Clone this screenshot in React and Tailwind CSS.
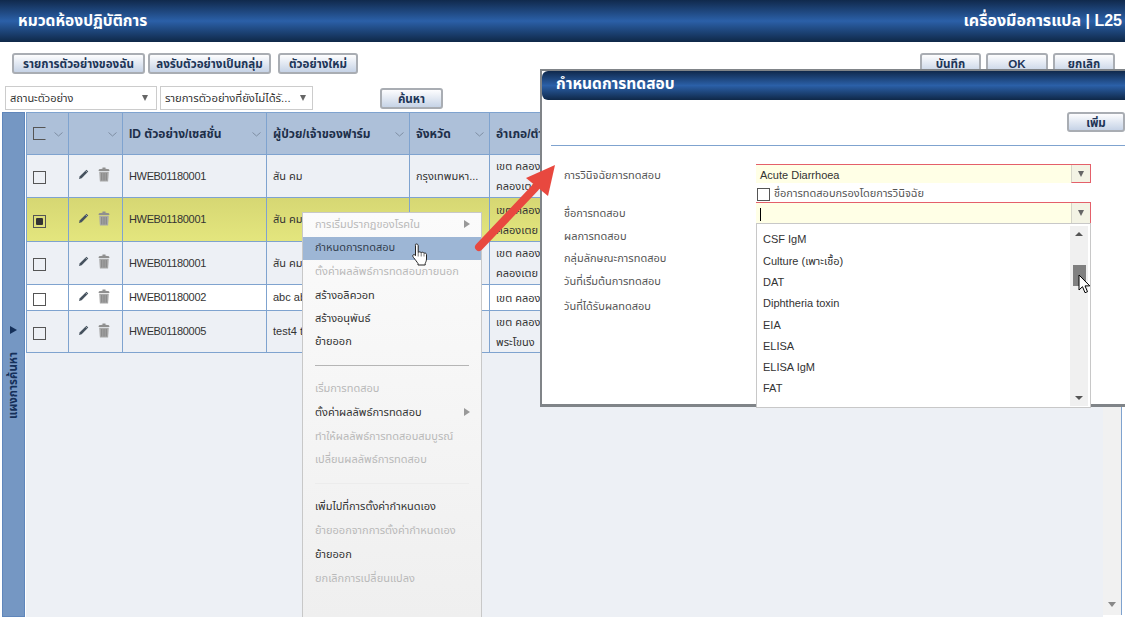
const font = { fontFamily: '"Liberation Sans", "Noto Sans Thai", "Noto Sans", sans-serif' };

const rows = [
  { h: 'h-[43px]', id: 'HWEB01180001', name: 'สัน คม', prov: 'กรุงเทพมหา...', dist: ['เขต คลองเตย', 'คลองเตย'], bg: 'bg-[#edf0f5]' },
  { h: 'h-[44px]', id: 'HWEB01180001', name: 'สัน คม', prov: '', dist: ['เขต คลองเตย', 'คลองเตย'], bg: 'bg-[linear-gradient(#d6d773,#e4e67e)]', sel: true },
  { h: 'h-[43px]', id: 'HWEB01180001', name: 'สัน คม', prov: '', dist: ['เขต คลองเตย', 'คลองเตย'], bg: 'bg-[#edf0f5]' },
  { h: 'h-[26px]', id: 'HWEB01180002', name: 'abc abc', prov: '', dist: ['เขต คลองเตย'], bg: 'bg-white' },
  { h: 'h-[42px]', id: 'HWEB01180005', name: 'test4 test', prov: '', dist: ['เขต คลองเตย', 'พระโขนง'], bg: 'bg-[#edf0f5]' },
];

const menu = [
  { t: 'การเริ่มปรากฏของโรคใน', off: true, sub: true, h: 'h-[24px]' },
  { t: 'กำหนดการทดสอบ', active: true, h: 'h-[23px]' },
  { t: 'ตั้งค่าผลลัพธ์การทดสอบภายนอก', off: true, h: 'h-[24px]' },
  { t: 'สร้างอลิควอท', h: 'h-[24px]' },
  { t: 'สร้างอนุพันธ์', h: 'h-[23px]' },
  { t: 'ย้ายออก', h: 'h-[23px]' },
  { line: 'bg-[#b5b5b5]' },
  { t: 'เริ่มการทดสอบ', off: true, h: 'h-[24px]' },
  { t: 'ตั้งค่าผลลัพธ์การทดสอบ', sub: true, h: 'h-[24px]' },
  { t: 'ทำให้ผลลัพธ์การทดสอบสมบูรณ์', off: true, h: 'h-[24px]' },
  { t: 'เปลี่ยนผลลัพธ์การทดสอบ', off: true, h: 'h-[23px]' },
  { line: 'bg-[#ececec]' },
  { t: 'เพิ่มไปที่การตั้งค่ากำหนดเอง', h: 'h-[24px]' },
  { t: 'ย้ายออกจากการตั้งค่ากำหนดเอง', off: true, h: 'h-[24px]' },
  { t: 'ย้ายออก', h: 'h-[24px]' },
  { t: 'ยกเลิกการเปลี่ยนแปลง', off: true, h: 'h-[24px]' },
];

const options = ['CSF IgM', 'Culture (เพาะเชื้อ)', 'DAT', 'Diphtheria toxin', 'EIA', 'ELISA', 'ELISA IgM', 'FAT'];

function Btn({ children, className = '' }) {
  return (
    <button className={`rounded-[3px] border-2 border-[#a9adb3] bg-[linear-gradient(#fdfdfe,#c6d3e6)] text-[11.6px] font-bold text-[#1d3557] ${className}`}>
      {children}
    </button>
  );
}

function Check({ on, open }) {
  return (
    <span className={`flex h-[13px] w-[13px] items-center justify-center border border-[#555] ${open ? 'border-r-transparent' : ''}`}>
      {on && <span className="h-[7px] w-[7px] rounded-[1px] bg-[#333]" />}
    </span>
  );
}

function Pencil() {
  return (
    <svg width="11" height="11" viewBox="0 0 12 12">
      <path d="M9.200.800l2 2-7.200 7.200L1 11l1-3z" fill="#46525e" />
      <path d="M8.200 1.800l2 2" stroke="#c9d0d8" strokeWidth=".8" />
    </svg>
  );
}

function Trash() {
  return (
    <svg width="12" height="15" viewBox="0 0 12 15">
      <path d="M4.500.500h3v1.200l3.500.5.500 1.800H.500l.5-1.800 3.500-.5z" fill="#8f8f8f" />
      <path d="M1.200 4.800h9.600l-.7 9.700H1.900z" fill="#a8a8a8" />
      <path d="M3.800 6v7.500M6 6v7.500M8.200 6v7.500" stroke="#7c7c7c" strokeWidth=".9" />
    </svg>
  );
}

function Caret({ className = '' }) {
  return <span className={`inline-block h-0 w-0 border-x-[3.5px] border-t-[6px] border-x-transparent border-t-[#666] ${className}`} />;
}

function Chevron() {
  return (
    <svg width="9" height="5" viewBox="0 0 9 5" className="absolute right-[5px] top-[19px]">
      <path d="M.5.500l4 3.500 4-3.500" fill="none" stroke="#7f8ea3" />
    </svg>
  );
}

function Combo({ children, h, leftTick }) {
  return (
    <div className={`flex w-[335px] border-t border-r border-[#e4606a] bg-[#ffffe6] ${h} ${leftTick ? 'border-b-0' : ''}`}>
      <div className="flex flex-1 items-center pl-[4px] pt-[2px] text-[11px] text-[#333]">{children}</div>
      <div className={`flex w-[19px] items-center justify-center border-l border-[#d5d5c8] bg-[#f3f3e4] ${leftTick ? '' : 'border-b border-b-[#e4606a]'}`}>
        <Caret />
      </div>
    </div>
  );
}

function Hand() {
  return (
    <svg className="absolute left-[411px] top-[243px]" width="18" height="24" viewBox="0 0 18 24">
      <path
        d="M5.500 1c1 0 1.700.8 1.700 1.700v6.800c.2-.8 2.800-.9 3 .3.3-.8 2.500-.8 2.800.5.500-.5 2.500-.3 2.500 1.200v4.500c0 2-.8 3-1.300 4.500v1.500H7v-1.500c-1-1.500-2.500-3.500-4.500-6-1-1.300-1-2.500 0-2.800.9-.3 1.500.3 2 1V2.700C3.800 1.800 4.500 1 5.500 1z"
        fill="white"
        stroke="#222"
        strokeWidth="1"
      />
      <path d="M7.200 9.500v4M10.200 9.800v3.700M13 10.300v3.200" stroke="#555" strokeWidth=".8" fill="none" />
    </svg>
  );
}

export default function App() {
  return (
    <div style={font} className="relative h-[617px] w-[1125px] overflow-hidden bg-white text-[11px] text-[#333]">
      <div className="flex h-[42px] items-center justify-between bg-[linear-gradient(#10294c,#2b60a8_50%,#0f2848)] pl-[18px] pr-[3px] text-[15.5px] font-bold text-white">
        <span>หมวดห้องปฏิบัติการ</span>
        <span className="text-[16px]">เครื่องมือการแปล | L25</span>
      </div>

      <div className="flex justify-between pl-[12px] pr-[10px] pt-[11px]">
        <div className="flex gap-[3px]">
          <Btn className="h-[21px] w-[133px]">รายการตัวอย่างของฉัน</Btn>
          <Btn className="h-[21px] w-[123px]">ลงรับตัวอย่างเป็นกลุ่ม</Btn>
          <Btn className="ml-[4px] h-[21px] w-[80px]">ตัวอย่างใหม่</Btn>
        </div>
        <div className="flex gap-[5px]">
          <Btn className="h-[21px] w-[61px]">บันทึก</Btn>
          <Btn className="h-[21px] w-[62px]">OK</Btn>
          <Btn className="h-[21px] w-[62px]">ยกเลิก</Btn>
        </div>
      </div>

      <div className="flex items-center pl-[5px] pt-[12px]">
        <div className="flex h-[24px] w-[152px] items-center justify-between border border-[#ccc] pl-[4px] pr-[8px]">
          <span>สถานะตัวอย่าง</span><Caret />
        </div>
        <div className="ml-[3px] flex h-[24px] w-[153px] items-center justify-between border border-[#ccc] pl-[4px] pr-[6px]">
          <span className="truncate text-[11.3px]">รายการตัวอย่างที่ยังไม่ได้รั...</span><Caret />
        </div>
        <Btn className="ml-[67px] h-[21px] w-[63px]">ค้นหา</Btn>
      </div>

      <div className="mt-[2px] flex h-[505px] pl-[2px]">
        <div className="flex w-[23px] flex-col items-center border border-[#5f86bb] bg-[#7597c3] pt-[213px]">
          <span className="h-0 w-0 border-y-[4px] border-l-[7px] border-y-transparent border-l-[#15305a]" />
          <span className="mt-[18px] rotate-180 text-[11.5px] font-bold text-[#15305a] [writing-mode:vertical-rl]">แผงการค้นหา</span>
        </div>
        <div className="ml-px flex-1 bg-[#edf0f5]">
          <table className="w-full table-fixed border-collapse bg-white">
            <colgroup>
              <col className="w-[42px]" /><col className="w-[54px]" /><col className="w-[144px]" />
              <col className="w-[143px]" /><col className="w-[80px]" /><col />
            </colgroup>
            <thead>
              <tr className="h-[42px] bg-[#adc0d9] text-left text-[12px] font-bold text-[#1d2f4a]">
                <th className="relative border border-[#7fa3cf] pl-[6px]"><Check open /><Chevron /></th>
                <th className="relative border border-[#7fa3cf]"><Chevron /></th>
                <th className="relative border border-[#7fa3cf] pl-[6px]">ID ตัวอย่าง/เซสชั่น<Chevron /></th>
                <th className="relative border border-[#7fa3cf] pl-[6px]">ผู้ป่วย/เจ้าของฟาร์ม<Chevron /></th>
                <th className="relative border border-[#7fa3cf] pl-[6px]">จังหวัด<Chevron /></th>
                <th className="relative border border-[#7fa3cf] pl-[6px]">อำเภอ/ตำบล<Chevron /></th>
              </tr>
            </thead>
            <tbody>
              {rows.map((r, i) => (
                <tr key={i} className={`${r.h} ${r.bg}`}>
                  <td className="border border-[#7fa3cf] pl-[6px] pt-[3px]"><Check on={r.sel} /></td>
                  <td className="border border-[#7fa3cf] pb-[3px]">
                    <div className="flex items-center gap-[9px] pl-[9px]"><Pencil /><Trash /></div>
                  </td>
                  <td className="border border-[#7fa3cf] pl-[6px] tracking-[-0.35px]">{r.id}</td>
                  <td className="border border-[#7fa3cf] pl-[6px]">{r.name}</td>
                  <td className="border border-[#7fa3cf] pl-[6px]">{r.prov}</td>
                  <td className="border border-[#7fa3cf] pl-[6px] leading-[20px]">
                    {r.dist.map((d) => <div key={d}>{d}</div>)}
                  </td>
                </tr>
              ))}
            </tbody>
          </table>
        </div>
        <div className="flex h-[503px] w-[19px] items-end justify-center border-r border-[#7fa3cf] bg-[#f1f1f1] pb-[8px]">
          <span className="h-0 w-0 border-x-[4px] border-t-[5px] border-x-transparent border-t-[#888]" />
        </div>
        <div className="w-[3px]" />
      </div>

      {/* เมนูคลิกขวา */}
      <div className="absolute left-[302px] top-[212px] h-[406px] w-[180px] border border-[#c8c8c8] bg-[linear-gradient(#fbfbfb,#efefef)]">
        {menu.map((m, i) =>
          m.line ? (
            <div key={i} className="flex h-[23px] items-center px-[12px]"><div className={`h-px w-full ${m.line}`} /></div>
          ) : (
            <div
              key={i}
              className={`flex items-center justify-between pb-[2px] pl-[12px] pr-[11px] ${m.h} ${m.active ? 'bg-[#9db6d5] text-[#33404f]' : ''} ${m.off ? 'text-[#b9b9b9]' : 'text-[#333]'}`}
            >
              <span>{m.t}</span>
              {m.sub && <span className="h-0 w-0 border-y-[4px] border-l-[6px] border-y-transparent border-l-[#999]" />}
            </div>
          )
        )}
      </div>

      <Hand />

      {/* กล่องโต้ตอบ */}
      <div className="absolute left-[540px] top-[69px] h-[338px] w-[585px] border-l-2 border-t-2 border-b-[3px] border-[#808488] bg-white">
        <div className="flex h-[29px] items-center rounded-l-[6px] bg-[linear-gradient(#10294c,#2b60a8_50%,#0f2848)] pb-[4px] pl-[14px] text-[15.5px] font-bold text-white">
          กำหนดการทดสอบ
        </div>
        <div className="flex justify-end pt-[12px]">
          <Btn className="h-[20px] w-[58px]">เพิ่ม</Btn>
        </div>
        <div className="ml-[9px] mt-[13px] h-px bg-[#7fa3cf]" />
        <div className="relative pl-[22px] text-[#555]">
          <div className="flex h-[57px] items-center pt-[2px]">การวินิจฉัยการทดสอบ</div>
          <div className="flex h-[20px] items-center">ชื่อการทดสอบ</div>
          <div className="flex h-[25px] items-center pt-[2px]">ผลการทดสอบ</div>
          <div className="flex h-[22px] items-center pb-[2px]">กลุ่มลักษณะการทดสอบ</div>
          <div className="flex h-[23px] items-center">วันที่เริ่มต้นการทดสอบ</div>
          <div className="flex h-[27px] items-center">วันที่ได้รับผลทดสอบ</div>

          <div className="absolute left-[214px] top-[18px]">
            <Combo h="h-[19px]">Acute Diarrhoea</Combo>
            <div className="flex h-[19px] items-end gap-[4px] pl-px pb-px"><Check /><span>ชื่อการทดสอบกรองโดยการวินิจฉัย</span></div>
            <Combo h="h-[21px]" leftTick><span className="h-[13px] w-px bg-black" /></Combo>
            <div className="relative h-[185px] w-[335px] border border-[#c8c8c8] bg-white pt-[5px]">
              {options.map((o) => (
                <div key={o} className="flex h-[21.3px] items-center pl-[6px] text-[#333]">{o}</div>
              ))}
              <div className="absolute right-[2px] top-[2px] flex h-[180px] w-[18px] flex-col items-center justify-between bg-[#f0f0f0] py-[6px]">
                <span className="h-0 w-0 border-x-[4px] border-b-[4px] border-x-transparent border-b-[#555]" />
                <span className="h-0 w-0 border-x-[4px] border-t-[4px] border-x-transparent border-t-[#555]" />
              </div>
              <div className="absolute right-[4px] top-[41px] h-[21px] w-[13px] bg-[#808080]" />
            </div>
          </div>
        </div>
      </div>

      {/* ลูกศรชี้ */}
      <svg className="absolute left-[465px] top-[155px]" width="100" height="105" viewBox="0 0 100 105">
        <path d="M14 92L70 33" stroke="#e8483f" strokeWidth="8" strokeLinecap="round" />
        <path d="M90 10L61 23L83 41z" fill="#e8483f" />
      </svg>

      <svg className="absolute left-[1078px] top-[274px]" width="13" height="21" viewBox="0 0 13 21">
        <path d="M1 1v15l3.500-3.300 2.500 6 2.500-1-2.500-5.800h4.800z" fill="white" stroke="black" />
      </svg>
    </div>
  );
}
